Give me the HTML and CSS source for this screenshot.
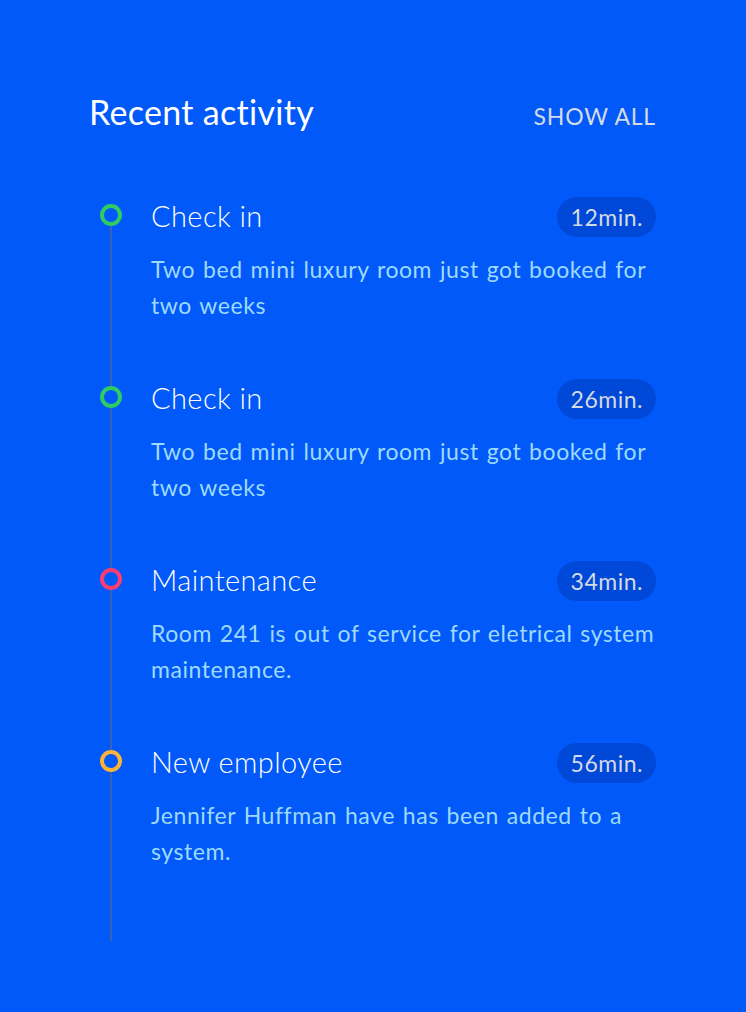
FILE: index.html
```html
<!DOCTYPE html>
<html>
<head>
<meta charset="utf-8">
<link rel="stylesheet" href="styles.css">
</head>
<body>
<div class="panel">
  <div class="header">
    <h1 class="title">Recent activity</h1>
    <a class="show-all">SHOW ALL</a>
  </div>
  <ul class="timeline">
    <li class="item">
      <div class="rail"><span class="dot dot-green"></span></div>
      <div class="content">
        <div class="row"><span class="name">Check in</span><span class="badge">12min.</span></div>
        <p class="desc">Two bed mini luxury room just got booked for two weeks</p>
      </div>
    </li>
    <li class="item">
      <div class="rail"><span class="dot dot-green"></span></div>
      <div class="content">
        <div class="row"><span class="name">Check in</span><span class="badge">26min.</span></div>
        <p class="desc">Two bed mini luxury room just got booked for two weeks</p>
      </div>
    </li>
    <li class="item">
      <div class="rail"><span class="dot dot-pink"></span></div>
      <div class="content">
        <div class="row"><span class="name">Maintenance</span><span class="badge">34min.</span></div>
        <p class="desc">Room 241 is out of service for eletrical system maintenance.</p>
      </div>
    </li>
    <li class="item item-last">
      <div class="rail"><span class="dot dot-orange"></span></div>
      <div class="content">
        <div class="row"><span class="name">New employee</span><span class="badge">56min.</span></div>
        <p class="desc">Jennifer Huffman have has been added to a system.</p>
      </div>
    </li>
  </ul>
</div>
</body>
</html>
```
FILE: styles.css
```css
html, body {
  margin: 0;
  padding: 0;
  background: #0059f8;
  height: 100%;
}
body {
  font-family: Lato, "Noto Sans", sans-serif;
  color: #ffffff;
}
.panel {
  padding: 92px 90px 0 89px;
}
.header {
  display: flex;
  justify-content: space-between;
  align-items: center;
  height: 42px;
}
.title {
  margin: 0;
  font-size: 34px;
  font-weight: 400;
  line-height: 42px;
  letter-spacing: 0.3px;
  margin-top: -2px;
}
.show-all {
  font-size: 23px;
  color: #d4dae6;
  letter-spacing: 0.8px;
  line-height: 42px;
  margin-top: 5px;
}
.timeline {
  list-style: none;
  margin: 0;
  padding: 70px 0 0 11px;
}
.item {
  display: flex;
  gap: 29px;
  height: 182px;
}
.item-last {
  height: 191px;
}
.rail {
  width: 22px;
  display: flex;
  flex-direction: column;
  align-items: center;
  flex: none;
}
.rail::after {
  content: "";
  flex: 1;
  width: 2px;
  background: #3b62b4;
}
.dot {
  width: 22px;
  height: 22px;
  box-sizing: border-box;
  border-radius: 50%;
  border: 4px solid;
  flex: none;
}
.dot-green { border-color: #2fcb63; }
.dot-pink { border-color: #ff3d73; }
.dot-orange { border-color: #ffb238; }
.content {
  flex: 1;
  margin-top: -8px;
}
.row {
  display: flex;
  justify-content: space-between;
  align-items: center;
  height: 40px;
}
.name {
  font-size: 29px;
  font-weight: 300;
  letter-spacing: 0.4px;
  margin-top: -1px;
}
.badge {
  background: #0048d8;
  color: #d4dae6;
  font-size: 23px;
  line-height: 40px;
  height: 40px;
  padding: 0 13px 0 14px;
  border-radius: 20px;
  letter-spacing: 0.5px;
  margin-top: 2px;
}
.desc {
  margin: 15px 0 0;
  font-size: 23px;
  line-height: 36px;
  color: #9fd9ff;
  letter-spacing: 0.55px;
  word-spacing: 1.5px;
}
```
